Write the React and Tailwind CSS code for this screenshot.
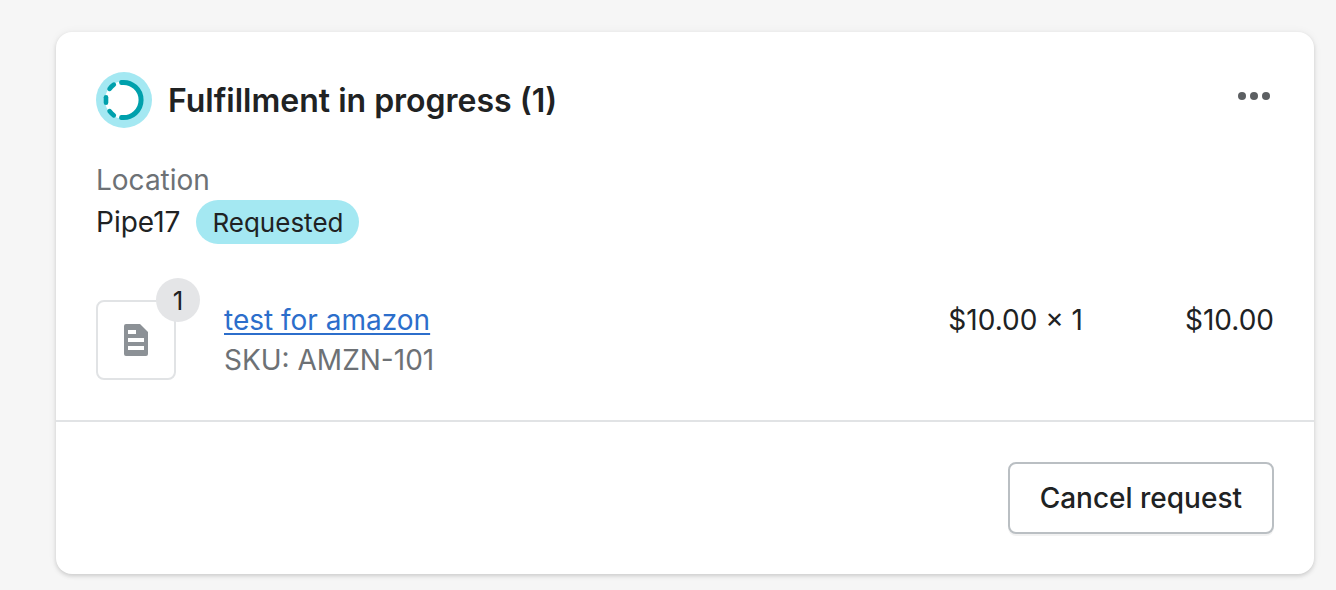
function ProgressIcon() {
  return (
    <svg viewBox="0 0 56 56" className="size-14 shrink-0" aria-hidden="true">
      <circle cx="28" cy="28" r="28" fill="#a4e8f2" />
      <circle cx="28" cy="28" r="19" fill="#fff" />
      <g fill="none" stroke="#00a0ac" strokeLinecap="round">
        <path d="M25.6 10.5 A17.6 17.6 0 1 1 25.6 45.5" strokeWidth="5" />
        <path d="M10 25.2V30.8" strokeWidth="4.6" />
        <path d="M13.6 16.8Q15.4 14.4 17.8 12.7" strokeWidth="4.7" />
        <path d="M13.6 39.2Q15.4 41.6 17.8 43.3" strokeWidth="4.7" />
      </g>
    </svg>
  );
}

function DocumentIcon() {
  return (
    <svg viewBox="0 0 24 32" className="h-8 w-6" aria-hidden="true">
      <path
        fill="#8c9196"
        fillRule="evenodd"
        d="M2 0H16L24 8V30A2 2 0 0 1 22 32H2A2 2 0 0 1 0 30V2A2 2 0 0 1 2 0ZM4 6V10H12V6ZM4 14V18H20V14ZM4 22V26H20V22Z"
      />
    </svg>
  );
}

export default function App() {
  return (
    <main className="min-h-screen bg-[#f6f6f6] pt-8 pr-[22px] pb-4 pl-14 font-['Inter',sans-serif] text-[28px] leading-10 text-[#202223]">
      <section className="rounded-2xl bg-white shadow-[0_0_10px_rgba(23,24,24,0.05),0_2px_4px_rgba(0,0,0,0.15)]">
        <div className="p-10">
          <header className="flex items-start justify-between">
            <div className="flex items-center gap-4">
              <ProgressIcon />
              <h2 className="pt-0.5 text-[32px] font-semibold">Fulfillment in progress (1)</h2>
            </div>
            <button type="button" aria-label="More actions" className="mt-1 size-10">
              <svg viewBox="0 0 40 40" className="size-10" fill="#5c5f62" aria-hidden="true">
                <circle cx="8" cy="20" r="4" />
                <circle cx="20" cy="20" r="4" />
                <circle cx="32" cy="20" r="4" />
              </svg>
            </button>
          </header>

          <div className="mt-8">
            <p className="text-[#6d7175]">Location</p>
            <div className="flex items-center gap-4">
              <span>Pipe17</span>
              <span className="flex h-11 items-center rounded-full bg-[#a4e8f2] px-4 pt-0.5 text-[26px]">
                Requested
              </span>
            </div>
          </div>

          <div className="mt-14 flex items-start">
            <div className="relative flex size-20 shrink-0 items-center justify-center rounded-lg border-2 border-[#e1e3e5]">
              <DocumentIcon />
              <span className="absolute -top-6 -right-[26px] flex size-11 items-center justify-center rounded-full bg-[#e4e5e7] pt-0.5 text-[26px]">
                1
              </span>
            </div>
            <div className="ml-12 flex-1">
              <a href="#product" className="text-[#2c6ecb] underline decoration-2 underline-offset-[3px]">
                test for amazon
              </a>
              <p className="text-[#6d7175]">SKU: AMZN-101</p>
            </div>
            <p>$10.00 × 1</p>
            <p className="w-[191px] text-right">$10.00</p>
          </div>
        </div>

        <footer className="flex justify-end border-t-2 border-[#e1e3e5] p-10">
          <button
            type="button"
            className="h-18 rounded-lg border-2 border-[#babfc3] bg-white px-[30px] font-medium shadow-[0_2px_0_rgba(0,0,0,0.05)]"
          >
            Cancel request
          </button>
        </footer>
      </section>
    </main>
  );
}
